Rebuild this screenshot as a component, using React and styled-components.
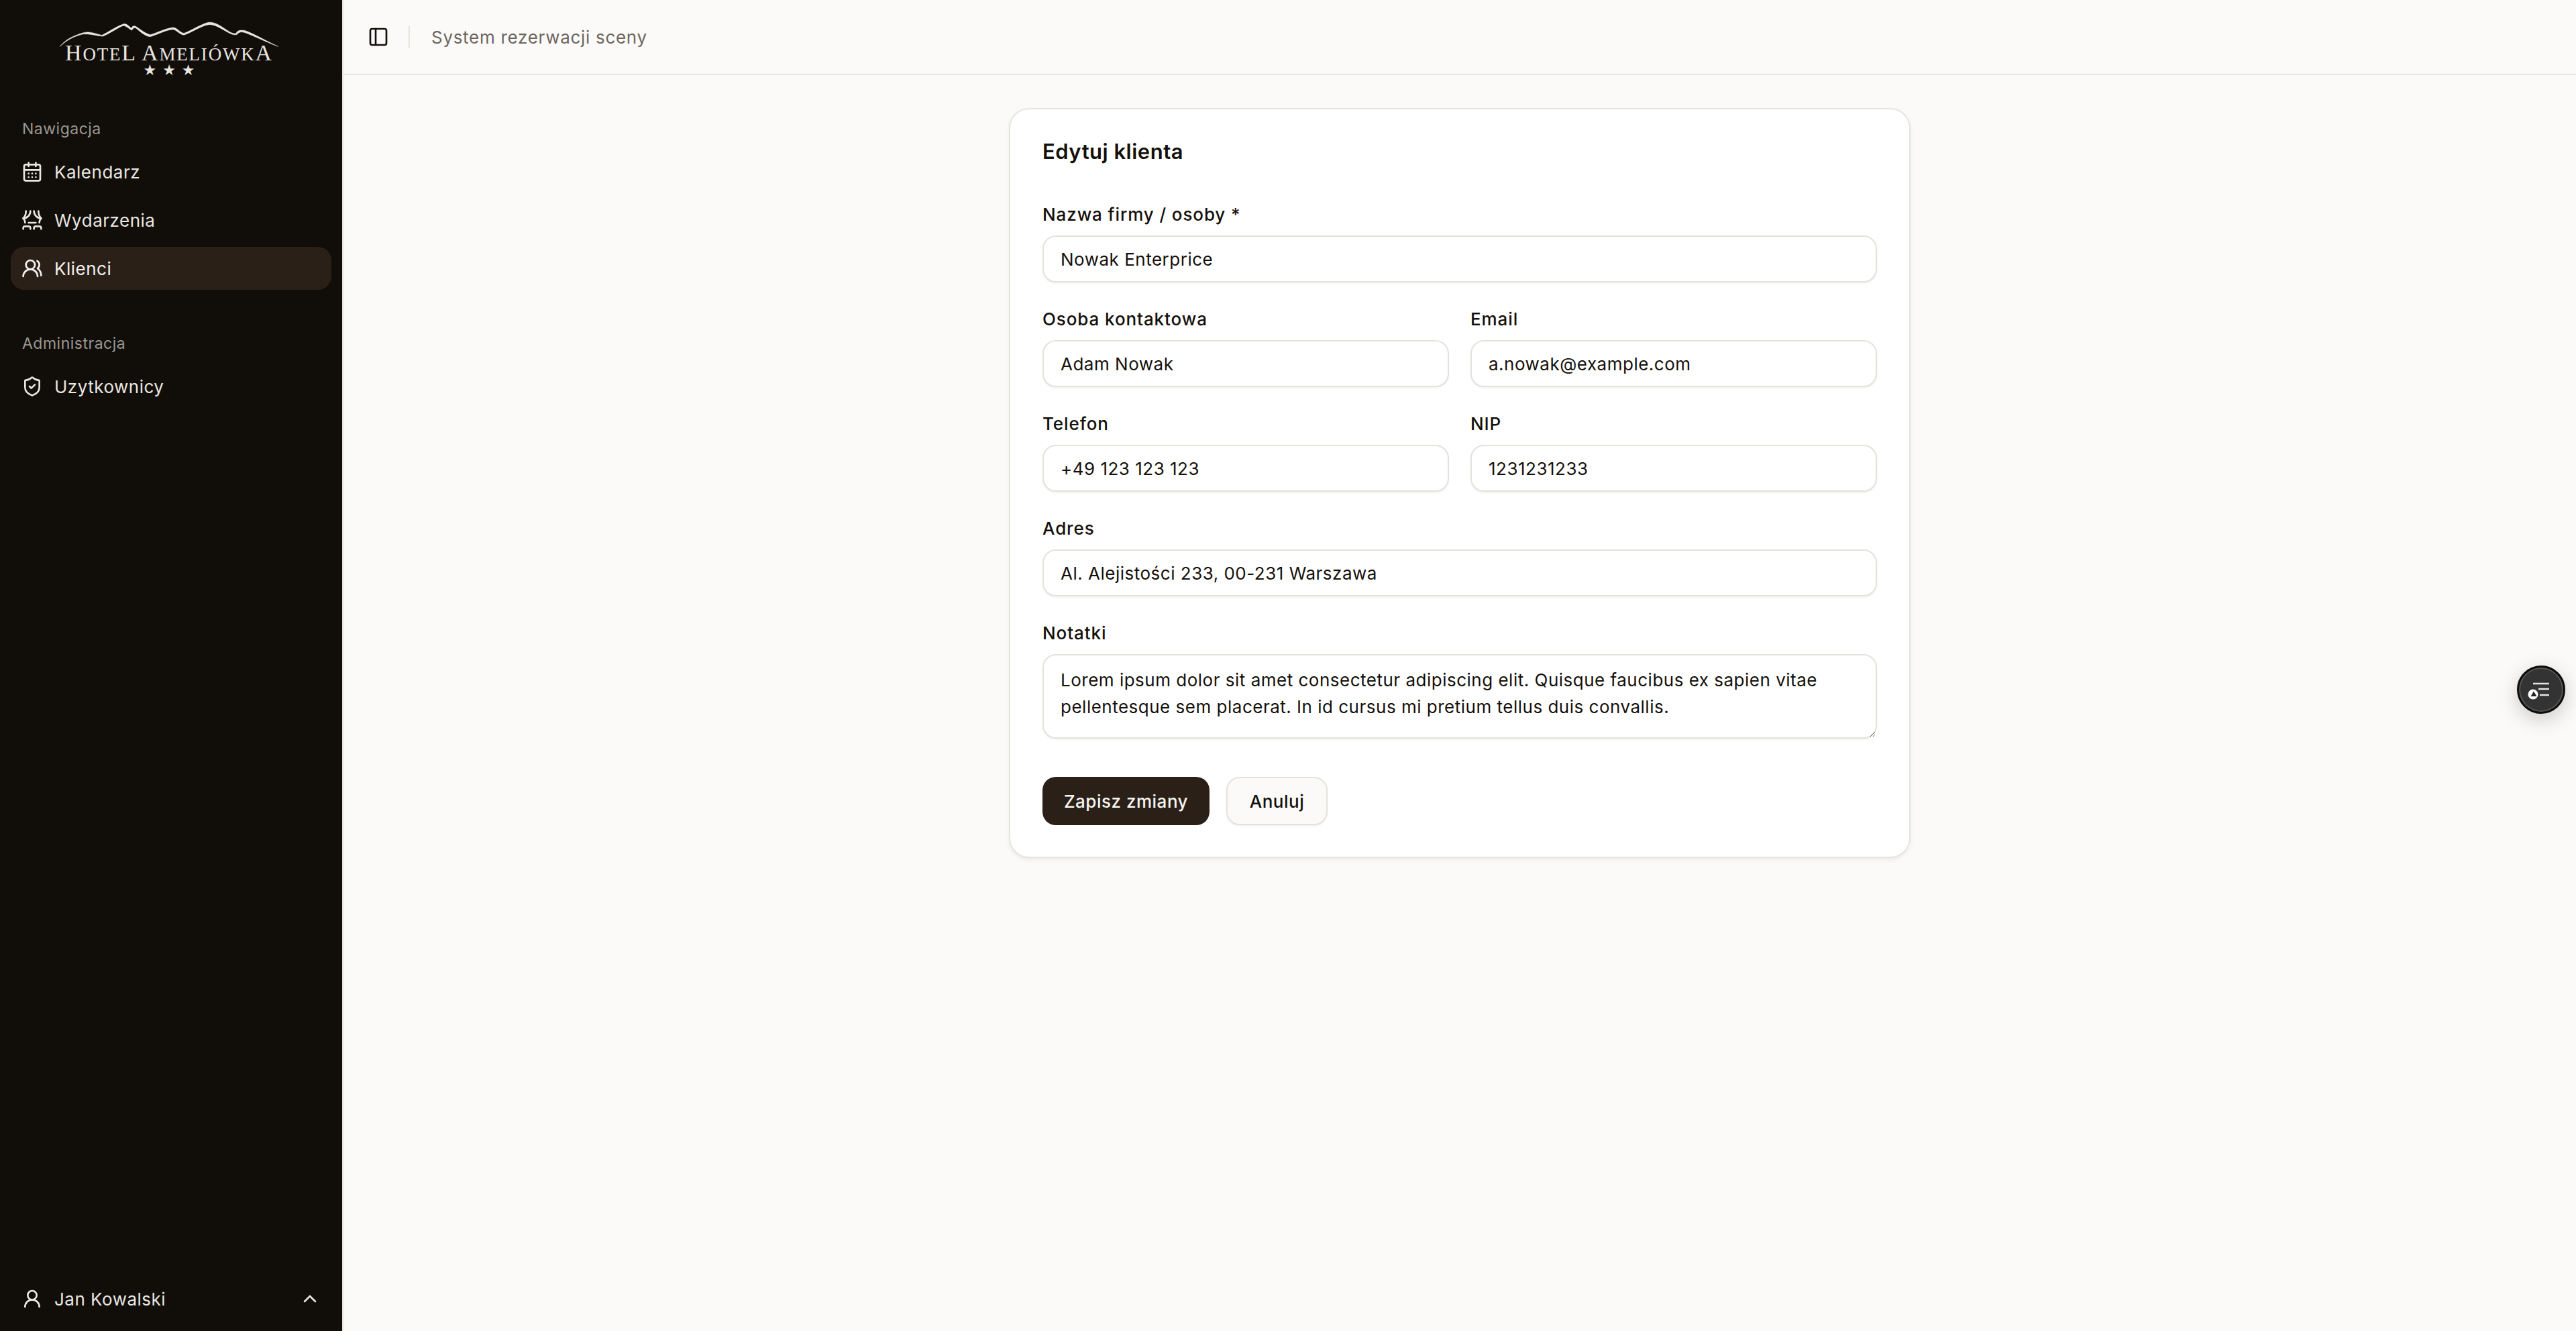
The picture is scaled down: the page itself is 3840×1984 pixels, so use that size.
import React from "react";
import styled, { createGlobalStyle } from "styled-components";
import { CalendarDays, Theater, UsersRound, ShieldCheck, UserRound, ChevronUp, PanelLeft } from "lucide-react";

const Global = createGlobalStyle`
  html, body { margin: 0; padding: 0; height: 100%; }
  body { background: #fbfaf8; font-family: Inter, "Noto Sans", sans-serif; color: #14100b; letter-spacing: .5px; }
  * { box-sizing: border-box; }
`;
const Shell = styled.div`display: flex; height: 1984px; width: 3840px; overflow: hidden;`;
const Sidebar = styled.aside`
  width: 512px; flex: none; background: #110d08; border-right: 2px solid #e6e4df;
  display: flex; flex-direction: column; color: #e9e6e1;
`;
const Logo = styled.div`height: 168px; padding: 32px 6px 0 0; display: flex; flex-direction: column; align-items: center;`;
const LogoMark = styled.svg`display: block; width: 328px; height: 38px; flex: none;`;
const LogoText = styled.div`
  font-family: "Liberation Serif", serif; font-size: 34px; line-height: 34px; color: #e9e6e1;
  letter-spacing: 1.8px; word-spacing: 0; margin: -8px 0 0 0; white-space: nowrap;
`;
const Small = styled.span`font-size: 27px;`;
const Stars = styled.div`font-size: 22px; line-height: 22px; letter-spacing: 9px; margin: -4px 0 0 9px; font-family: "DejaVu Sans", sans-serif;`;
const Group = styled.section`padding: 0 16px; margin-bottom: 56px;`;
const GroupLabel = styled.div`
  height: 48px; line-height: 48px; padding-left: 17px; font-size: 23px; color: #9a9793;
`;
const Menu = styled.nav`display: flex; flex-direction: column; gap: 8px; margin-top: 8px;`;
const Item = styled.a`
  height: 64px; border-radius: 20px; display: flex; align-items: center; gap: 17px; padding-left: 16px;
  font-size: 26px; background: ${p => p.$active ? "#2a2018" : "transparent"};
  color: ${p => p.$active ? "#f4f2ee" : "#e9e6e1"};
`;
const Spacer = styled.div`flex: 1;`;
const Footer = styled.div`
  height: 96px; padding: 0 32px; display: flex; align-items: center; gap: 17px; font-size: 26px;
`;
const FooterName = styled.span`flex: 1;`;
const Main = styled.main`flex: 1; display: flex; flex-direction: column; min-width: 0;`;
const Header = styled.header`
  height: 112px; border-bottom: 2px solid #e6e4df; display: flex; align-items: center; padding-left: 36px; color: #14100b;
`;
const Divider = styled.div`width: 2px; height: 32px; background: #e6e4df; margin: 0 32px 0 29px;`;
const HeaderTitle = styled.div`font-size: 26px; color: #6b665f; letter-spacing: .7px;`;
const Content = styled.div`flex: 1; display: flex; justify-content: center; padding-top: 49px;`;
const Card = styled.form`
  width: 1344px; height: 1118px; background: #fff; border: 2px solid #e6e4df; border-radius: 30px;
  padding: 45px 48px 0; box-shadow: 0 3px 6px rgba(0,0,0,.06); display: flex; flex-direction: column;
`;
const Title = styled.h2`margin: 0 0 58px; font-size: 31px; line-height: 36px; font-weight: 600; color: #14100b; letter-spacing: .5px;`;
const Rows = styled.div`display: flex; flex-direction: column; gap: 37px;`;
const Row = styled.div`display: grid; grid-template-columns: ${p => p.$cols === 2 ? "1fr 1fr" : "1fr"}; gap: 32px;`;
const Field = styled.label`display: flex; flex-direction: column; gap: 14px;`;
const Label = styled.span`font-size: 26px; line-height: 35px; font-weight: 450; color: #14100b; letter-spacing: .9px;`;
const Input = styled.input`
  height: 70px; border: 2px solid #e4e2dc; border-radius: 20px; padding: 0 25px; background: #fff;
  font: 400 26px Inter, sans-serif; letter-spacing: .5px; color: #14100b; box-shadow: 0 2px 3px rgba(0,0,0,.05); outline: none; width: 100%;
`;
const Area = styled.textarea`
  height: 126px; border: 2px solid #e4e2dc; border-radius: 20px; padding: 17px 25px; background: #fff;
  font: 400 26px/40px Inter, sans-serif; letter-spacing: .5px; color: #14100b; box-shadow: 0 2px 3px rgba(0,0,0,.05); outline: none; width: 100%; display: block; resize: vertical;
`;
const Actions = styled.div`display: flex; gap: 25px; margin-top: 57px;`;
const Primary = styled.button`
  height: 72px; width: 249px; border: 0; border-radius: 20px; background: #2a2018; color: #f7f5f2; font: 450 26px Inter, sans-serif; letter-spacing: .5px;
`;
const Secondary = styled.button`
  height: 72px; width: 151px; border: 2px solid #e4e2dc; border-radius: 20px; background: #fbfaf8; color: #14100b;
  font: 450 26px Inter, sans-serif; letter-spacing: .5px; box-shadow: 0 2px 3px rgba(0,0,0,.05);
`;
const Fab = styled.button`
  position: absolute; left: 3752px; top: 992px; width: 72px; height: 72px; border-radius: 50%; background: #333; padding: 0;
  border: 3px solid #0c0c0c; box-shadow: inset 0 0 0 2px #555, 0 8px 30px rgba(0,0,0,.2);
  display: flex; align-items: center; justify-content: center;
`;

export default function App() {
  const ic = { size: 32, strokeWidth: 2, style: { flex: "none" } };
  return (
    <Shell>
      <Global />
      <Sidebar>
        <Logo>
          <LogoMark viewBox="85 35 985 115">
            <path fill="#e9e6e1" stroke="#e9e6e1" strokeWidth="1.5" d="M85 148 C110 120 130 105 190 86 C215 78 240 88 275 97 C310 78 345 55 370 47 C385 42 395 55 408 66 C410 55 420 52 432 60 C450 72 470 88 492 95 C525 85 565 65 595 62 C615 62 625 85 645 88 C680 75 720 48 755 39 C785 36 810 55 845 78 C860 88 875 92 880 88 C885 75 900 72 920 76 C960 90 1020 125 1070 148 C1020 130 960 100 918 85 C900 80 893 84 884 94 C870 98 855 92 835 80 C805 62 785 50 760 49 C725 52 680 85 645 96 C625 95 612 72 595 71 C565 72 525 95 492 104 C468 100 448 82 432 68 C422 60 415 65 410 75 C395 68 385 55 372 54 C350 60 315 88 278 102 C245 98 215 90 190 92 C140 104 110 125 85 148 Z" />
          </LogoMark>
          <LogoText>H<Small>OTE</Small>L A<Small>MELIÓWK</Small>A</LogoText>
          <Stars>★★★</Stars>
        </Logo>
        <Group>
          <GroupLabel>Nawigacja</GroupLabel>
          <Menu>
            <Item><CalendarDays {...ic} />Kalendarz</Item>
            <Item><Theater {...ic} />Wydarzenia</Item>
            <Item $active><UsersRound {...ic} />Klienci</Item>
          </Menu>
        </Group>
        <Group>
          <GroupLabel>Administracja</GroupLabel>
          <Menu>
            <Item><ShieldCheck {...ic} />Uzytkownicy</Item>
          </Menu>
        </Group>
        <Spacer />
        <Footer>
          <UserRound {...ic} />
          <FooterName>Jan Kowalski</FooterName>
          <ChevronUp {...ic} />
        </Footer>
      </Sidebar>
      <Main>
        <Header>
          <PanelLeft {...ic} />
          <Divider />
          <HeaderTitle>System rezerwacji sceny</HeaderTitle>
        </Header>
        <Content>
          <Card>
            <Title>Edytuj klienta</Title>
            <Rows>
              <Row><Field><Label>Nazwa firmy / osoby *</Label><Input defaultValue="Nowak Enterprice" /></Field></Row>
              <Row $cols={2}>
                <Field><Label>Osoba kontaktowa</Label><Input defaultValue="Adam Nowak" /></Field>
                <Field><Label>Email</Label><Input defaultValue="a.nowak@example.com" /></Field>
              </Row>
              <Row $cols={2}>
                <Field><Label>Telefon</Label><Input defaultValue="+49 123 123 123" /></Field>
                <Field><Label>NIP</Label><Input defaultValue="1231231233" /></Field>
              </Row>
              <Row><Field><Label>Adres</Label><Input defaultValue="Al. Alejistości 233, 00-231 Warszawa" /></Field></Row>
              <Row><Field><Label>Notatki</Label><Area defaultValue="Lorem ipsum dolor sit amet consectetur adipiscing elit. Quisque faucibus ex sapien vitae pellentesque sem placerat. In id cursus mi pretium tellus duis convallis." /></Field></Row>
            </Rows>
            <Actions>
              <Primary type="button">Zapisz zmiany</Primary>
              <Secondary type="button">Anuluj</Secondary>
            </Actions>
          </Card>
        </Content>
      </Main>
      <Fab type="button" aria-label="Opcje">
        <svg width="40" height="40" viewBox="0 0 40 40">
          <path d="M8 11h24M16 19h16M18 28h14" stroke="#e4e4e4" strokeWidth="2.6" fill="none" />
          <circle cx="8" cy="27" r="7.5" fill="#fff" />
          <path d="M9 22.5l4.5 7.5h-9z" fill="#222" />
        </svg>
      </Fab>
    </Shell>
  );
}
